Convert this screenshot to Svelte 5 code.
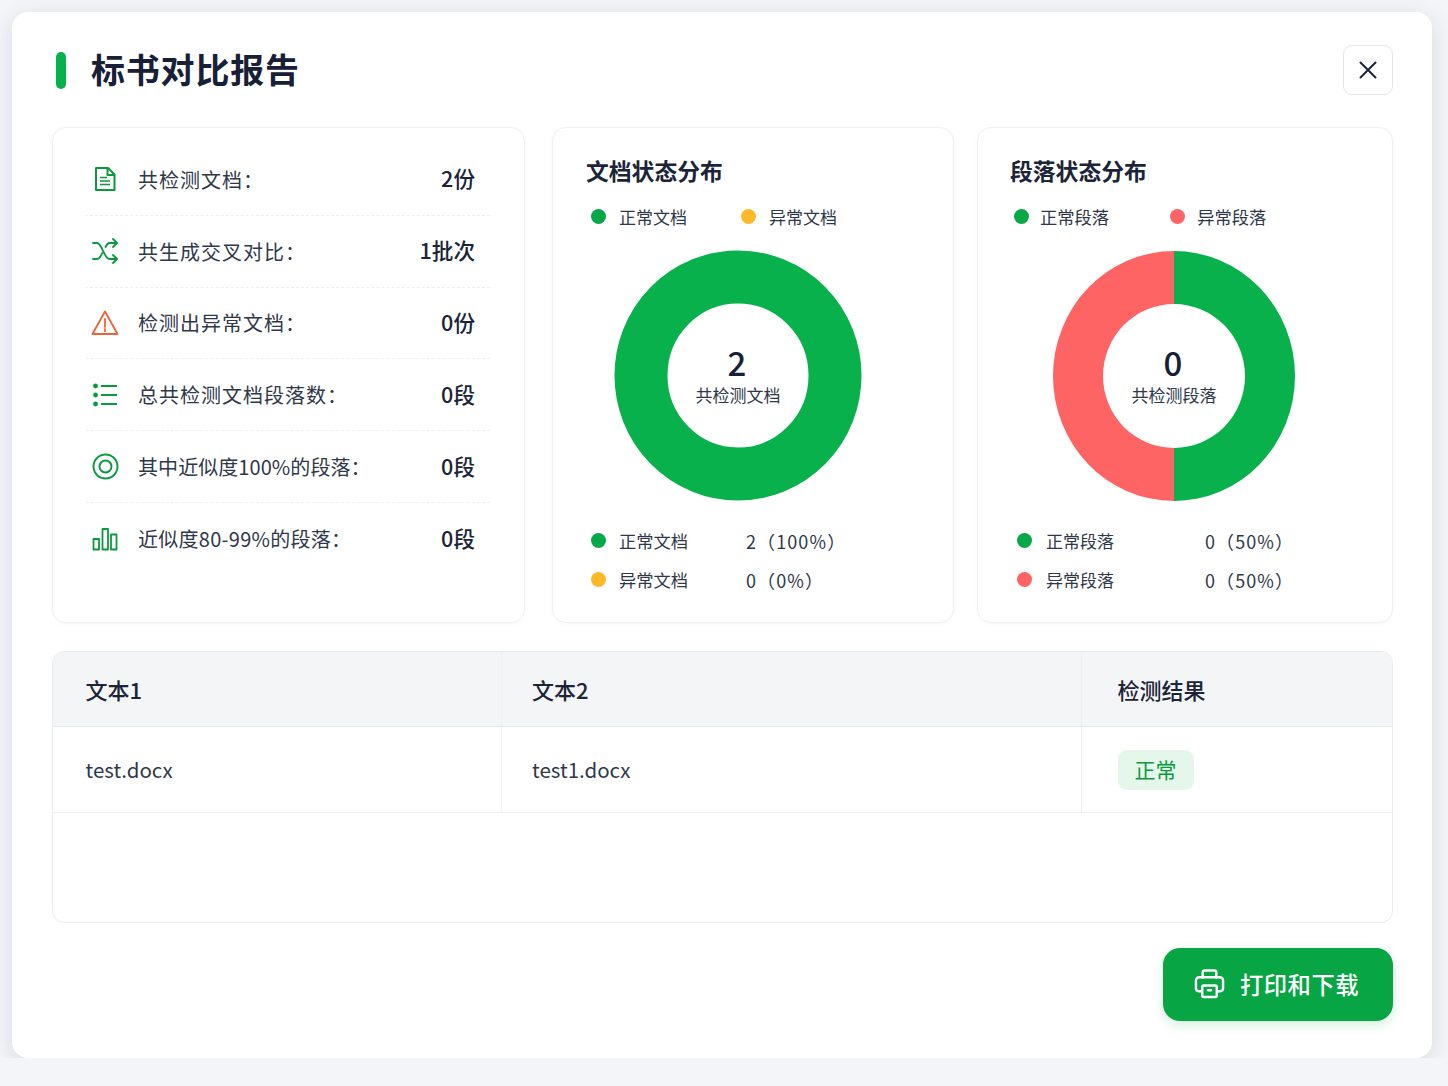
<script>
  const stats = [
    { icon: 'doc', label: '共检测文档：', value: '2份', fit: 'loose' },
    { icon: 'shuffle', label: '共生成交叉对比：', value: '1批次', fit: 'loose' },
    { icon: 'warn', label: '检测出异常文档：', value: '0份', fit: 'loose' },
    { icon: 'list', label: '总共检测文档段落数：', value: '0段', fit: 'loose' },
    { icon: 'target', label: '其中近似度100%的段落：', value: '0段', fit: 'tight' },
    { icon: 'bars', label: '近似度80-99%的段落：', value: '0段', fit: 'mid' }
  ];
</script>

<div class="modal">
  <header class="head">
    <span class="bar"></span>
    <h1>标书对比报告</h1>
    <button class="close" aria-label="关闭">
      <svg width="20" height="20" viewBox="0 0 20 20" fill="none" stroke="#1b2438" stroke-width="2" stroke-linecap="round"><path d="M2.5 2.5 17.5 17.5M17.5 2.5 2.5 17.5"/></svg>
    </button>
  </header>

  <section class="cards">
    <div class="card stats">
      {#each stats as s, i}
        <div class="stat" class:last={i === stats.length - 1}>
          <span class="ico">
            {#if s.icon === 'doc'}
              <svg width="26" height="26" viewBox="0 0 26 26" fill="none" stroke="#0a9a3e" stroke-width="2" stroke-linejoin="round"><path d="M4 2h12l6.500 6.500V24H4z"/><path d="M15.500 2v7h7"/><path d="M8 11.500h7M8 15h10M8 18.500h10" stroke-width="1.700"/></svg>
            {:else if s.icon === 'shuffle'}
              <svg width="28" height="26" viewBox="0 0 28 26" fill="none" stroke="#0a9a3e" stroke-width="1.800" stroke-linecap="round" stroke-linejoin="round"><path d="M2 5h4c5 0 7 16 12.500 16h7M2 21h4c2.500 0 4-3 5.200-6M14.500 9c1-2 2-4 4-4h7"/><path d="M22 1l4 4-4 4M22 17l4 4-4 4"/></svg>
            {:else if s.icon === 'warn'}
              <svg width="28" height="26" viewBox="0 0 28 26" fill="none" stroke="#f0603a" stroke-width="1.800" stroke-linejoin="round"><path d="M14 1.500 1.500 24h25z"/><path d="M14 9v8M14 19v2.200" stroke-linecap="round"/></svg>
            {:else if s.icon === 'list'}
              <svg width="26" height="24" viewBox="0 0 26 24" fill="none" stroke="#0a9a3e" stroke-width="2"><path d="M9 3h16M9 12h16M9 21h16"/><g fill="#0a9a3e" stroke="none"><circle cx="3.500" cy="3" r="2.400"/><circle cx="3.500" cy="12" r="2.400"/><circle cx="3.500" cy="21" r="2.400"/></g></svg>
            {:else if s.icon === 'target'}
              <svg width="27" height="27" viewBox="0 0 27 27" fill="none" stroke="#0a9a3e" stroke-width="1.900"><circle cx="13.500" cy="13.500" r="12"/><circle cx="13.500" cy="13.500" r="6"/></svg>
            {:else}
              <svg width="26" height="24" viewBox="0 0 26 24" fill="none" stroke="#0a9a3e" stroke-width="1.800" stroke-linejoin="round"><path d="M1.500 12h5.500v10.500H1.500zM10.500 2h5.500v20.500h-5.500zM19 7.500h5.500v15H19z"/></svg>
            {/if}
          </span>
          <span class="label {s.fit}">{s.label}</span>
          <span class="value">{s.value}</span>
        </div>
      {/each}
    </div>

    <div class="card chart one">
      <h2>文档状态分布</h2>
      <div class="legend top">
        <span class="key"><i class="dot green"></i>正常文档</span>
        <span class="key k2"><i class="dot amber"></i>异常文档</span>
      </div>
      <div class="donut">
        <svg width="250" height="254" viewBox="0 0 250 254">
          <ellipse cx="125" cy="126.500" rx="97" ry="98.500" fill="none" stroke="#08b14c" stroke-width="53"/>
        </svg>
        <div class="center"><b>2</b><span>共检测文档</span></div>
      </div>
      <div class="rows">
        <div class="row"><i class="dot green"></i><span class="rn">正常文档</span><span class="rv">2（100%）</span></div>
        <div class="row"><i class="dot amber"></i><span class="rn">异常文档</span><span class="rv">0（0%）</span></div>
      </div>
    </div>

    <div class="card chart two">
      <h2>段落状态分布</h2>
      <div class="legend top">
        <span class="key"><i class="dot green"></i>正常段落</span>
        <span class="key k2"><i class="dot red"></i>异常段落</span>
      </div>
      <div class="donut">
        <svg width="250" height="254" viewBox="0 0 250 254">
          <path d="M125 2A121 125 0 0 1 125 252V199A71 72 0 0 0 125 55Z" fill="#08b14c"/>
          <path d="M125 2A121 125 0 0 0 125 252V199A71 72 0 0 1 125 55Z" fill="#ff6464"/>
        </svg>
        <div class="center"><b>0</b><span>共检测段落</span></div>
      </div>
      <div class="rows">
        <div class="row"><i class="dot green"></i><span class="rn">正常段落</span><span class="rv">0（50%）</span></div>
        <div class="row"><i class="dot red"></i><span class="rn">异常段落</span><span class="rv">0（50%）</span></div>
      </div>
    </div>
  </section>

  <section class="table">
    <div class="tr th">
      <div class="c c1">文本1</div>
      <div class="c c2">文本2</div>
      <div class="c c3">检测结果</div>
    </div>
    <div class="tr td">
      <div class="c c1">test.docx</div>
      <div class="c c2">test1.docx</div>
      <div class="c c3"><span class="tag">正常</span></div>
    </div>
  </section>

  <footer class="foot">
    <button class="print">
      <svg width="31" height="31" viewBox="0 0 32 32" fill="none" stroke="#fff" stroke-width="2.500" stroke-linejoin="round" stroke-linecap="round"><path d="M9 10V4.500a2 2 0 0 1 2-2h10a2 2 0 0 1 2 2V10"/><path d="M8 24H5a3 3 0 0 1-3-3v-8a3.500 3.500 0 0 1 3.500-3.500h21A3.500 3.500 0 0 1 30 13v8a3 3 0 0 1-3 3h-3"/><rect x="8.500" y="18" width="15" height="12" rx="1.500"/><path d="M14.500 23h3"/></svg>
      <span>打印和下载</span>
    </button>
  </footer>
</div>

<style>
  :global(body) {
    margin: 0;
    background: #f4f5f8;
  }
  .modal {
    box-sizing: border-box;
    width: 1420px;
    height: 1046px;
    margin: 12px 16px 0 12px;
    padding: 33px 39px 0 40px;
    background: #fff;
    border-radius: 16px;
    box-shadow: 0 6px 24px rgba(30, 40, 70, 0.13);
    font-family: "Noto Sans CJK SC", "Noto Sans", sans-serif;
    color: #2b3447;
  }
  .head {
    display: flex;
    align-items: center;
    height: 50px;
    margin-bottom: 32px;
  }
  .bar {
    width: 10px;
    height: 37px;
    margin: 0 0 0 4px;
    border-radius: 5px;
    background: #08b14c;
  }
  h1 {
    margin: -2px 0 0 25px;
    font-size: 34px;
    line-height: 50px;
    font-weight: 700;
    letter-spacing: 0.8px;
    color: #172036;
    flex: 1;
  }
  .close {
    display: flex;
    align-items: center;
    justify-content: center;
    width: 50px;
    height: 50px;
    padding: 0;
    box-sizing: border-box;
    border: 1.500px solid #e3e6ec;
    border-radius: 9px;
    background: #fff;
  }
  .cards {
    display: flex;
    height: 496px;
  }
  .card {
    box-sizing: border-box;
    border: 1.500px solid #eef0f4;
    border-radius: 14px;
    background: #fff;
    box-shadow: 0 1px 4px rgba(30, 40, 70, 0.03);
  }
  .stats {
    width: 473px;
    padding: 16px 34px 0 32px;
  }
  .stat {
    display: flex;
    align-items: center;
    height: 71.800px;
    border-bottom: 1.500px dashed #eceef2;
    box-sizing: border-box;
    padding-right: 15px;
  }
  .stat.last {
    border-bottom: 0;
  }
  .ico {
    display: flex;
    align-items: center;
    justify-content: center;
    width: 40px;
    margin-right: 13px;
  }
  .label {
    flex: 1;
    font-size: 20px;
    color: #2f384b;
  }
  .loose {
    letter-spacing: 1px;
  }
  .mid {
    letter-spacing: 0.27px;
  }
  .tight {
    letter-spacing: 0.07px;
  }
  .value {
    padding-bottom: 3px;
    font-size: 21.600px;
    font-weight: 500;
    color: #1b2438;
  }
  .chart {
    position: relative;
    padding: 26px 0 0 33px;
  }
  .one {
    width: 402px;
    margin-left: 27px;
  }
  .two {
    width: 416px;
    margin-left: 23px;
  }
  h2 {
    margin: 0;
    font-size: 22.800px;
    line-height: 34px;
    font-weight: 700;
    color: #1b2438;
  }
  .two h2 {
    margin-left: -1px;
  }
  .legend {
    display: flex;
    align-items: center;
    height: 26px;
    margin-top: 15px;
    padding-left: 5px;
    font-size: 17px;
    color: #2f384b;
  }
  .key {
    display: flex;
    align-items: center;
  }
  .one .k2 {
    margin-left: 54px;
  }
  .two .legend {
    padding-left: 3px;
    font-size: 17.300px;
  }
  .two .legend .dot {
    margin-right: 11px;
  }
  .two .k2 {
    margin-left: 61px;
  }
  .two .legend .k2 .dot {
    margin-right: 12px;
  }
  .dot {
    display: block;
    width: 15px;
    height: 15px;
    border-radius: 50%;
    margin-right: 13px;
  }
  .green {
    background: #08a849;
  }
  .amber {
    background: #fdb92a;
  }
  .red {
    background: #ff6464;
  }
  .donut {
    position: relative;
    width: 250px;
    height: 254px;
    margin-top: 20px;
  }
  .one .donut {
    margin-left: 27px;
  }
  .two .donut {
    margin-left: 38px;
  }
  .center {
    position: absolute;
    left: 0;
    right: 0;
    top: 92px;
    display: flex;
    flex-direction: column;
    align-items: center;
    color: #2f384b;
    font-size: 17px;
    line-height: 22px;
  }
  .center b {
    font-size: 33px;
    line-height: 42px;
    font-weight: 500;
    color: #172036;
    margin-left: -2px;
  }
  .center span {
    margin-top: 1px;
  }
  .rows {
    margin-top: 18px;
    padding-left: 5px;
  }
  .row {
    display: flex;
    align-items: center;
    height: 39px;
    font-size: 17.300px;
    color: #2f384b;
  }
  .rn {
    width: 127px;
  }
  .two .row .dot {
    margin-left: 1px;
    margin-right: 14px;
  }
  .two .row {
    font-size: 17px;
  }
  .two .rn {
    width: 159px;
  }
  .rv {
    letter-spacing: 1.100px;
    font-size: 18px;
  }
  .table {
    box-sizing: border-box;
    height: 272px;
    margin-top: 28px;
    border: 1.500px solid #e9ebf0;
    border-radius: 12px;
    overflow: hidden;
  }
  .tr {
    display: grid;
    grid-template-columns: 449px 580px 1fr;
  }
  .th {
    height: 75px;
    background: #f4f5f7;
    border-bottom: 1.500px solid #e6e8ed;
    box-sizing: border-box;
    font-size: 22px;
    font-weight: 500;
    color: #1b2438;
  }
  .td {
    height: 86px;
    border-bottom: 1.500px solid #eef0f4;
    box-sizing: border-box;
    font-size: 20.500px;
    color: #2f384b;
  }
  .td .c1,
  .td .c2 {
    padding-bottom: 1px;
  }
  .c {
    display: flex;
    align-items: center;
    padding-left: 32.500px;
  }
  .c1 {
    border-right: 1.500px solid #eef0f3;
  }
  .c2 {
    padding-left: 30px;
    border-right: 1.500px solid #eef0f3;
  }
  .c3 {
    padding-left: 35.500px;
  }
  .tag {
    display: flex;
    align-items: center;
    justify-content: center;
    box-sizing: border-box;
    width: 76px;
    height: 40px;
    padding-bottom: 2px;
    border-radius: 9px;
    background: #e5f6ea;
    color: #0a9a3e;
    font-size: 21px;
  }
  .foot {
    display: flex;
    justify-content: flex-end;
    margin-top: 25px;
  }
  .print {
    display: flex;
    align-items: center;
    justify-content: center;
    gap: 15px;
    width: 230px;
    height: 73px;
    padding: 0 3px 2px 0;
    border: 0;
    border-radius: 17px;
    background: #08a544;
    box-shadow: 0 4px 12px rgba(8, 165, 68, 0.18);
    color: #fff;
    font-family: inherit;
    font-size: 23.300px;
    font-weight: 500;
    letter-spacing: 0.5px;
  }
</style>
